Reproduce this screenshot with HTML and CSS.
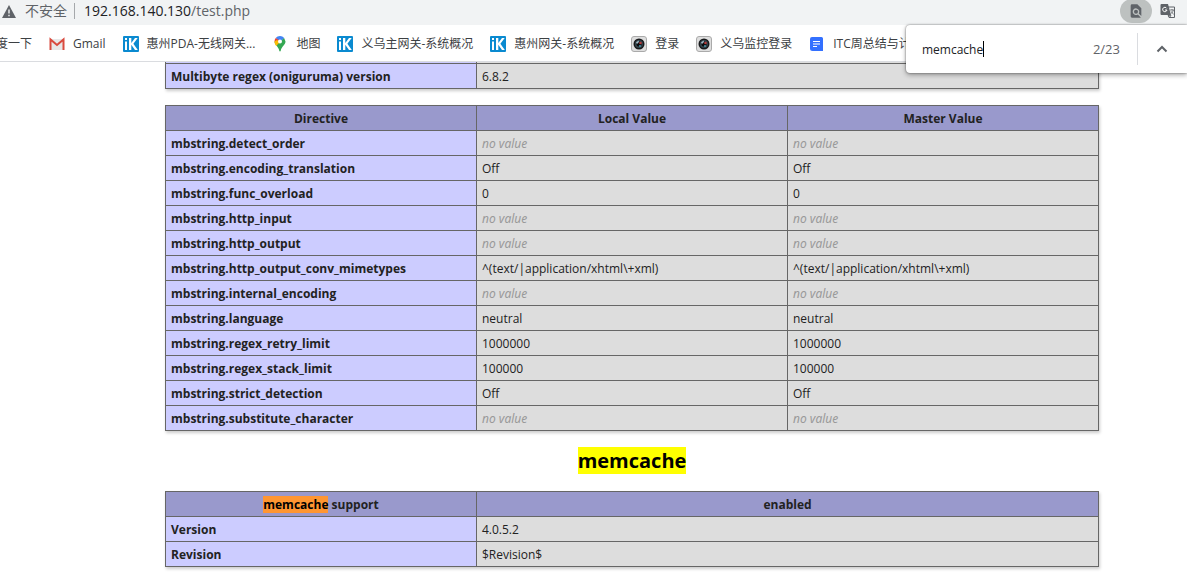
FILE: index.html
```html
<!DOCTYPE html>
<html lang="zh-CN">
<head>
<meta charset="utf-8">
<title>phpinfo()</title>
<link rel="stylesheet" href="styles.css">
</head>
<body>
<svg class="defs" aria-hidden="true">
  <symbol id="ikuai" viewBox="0 0 16 16"><rect width="16" height="16" rx="1" fill="#0a8ad0"/><path d="M2 2h2v2H2zM2 5.500h2V14H2zM6 2h2.300v5L12 2h2.700l-4.300 5.700L14.800 14H12L8.300 8.800V14H6z" fill="#fff"/></symbol>
  <symbol id="camera" viewBox="0 0 16 16"><rect x=".5" y=".5" width="15" height="15" rx="2.500" fill="#dedede" stroke="#aaa"/><circle cx="8" cy="8" r="5.500" fill="#17191b"/><circle cx="8" cy="8" r="4" fill="#34444c"/><circle cx="8" cy="8" r="2.500" fill="#0b0b0d"/><path d="M5 6.500 7.500 4.500 8 6 6 8z" fill="#9fb9c6"/><circle cx="9.500" cy="7" r="1.300" fill="#b43c3c"/><circle cx="9" cy="10" r="1" fill="#4b9aae"/></symbol>
</svg>
<header class="browser">
  <div class="address-bar">
    <svg class="warning" viewBox="0 0 14 13" aria-hidden="true"><path d="M7 0 14 13H0z" fill="#5f6368"/><path d="M6.300 4.500h1.400v4H6.300zM6.300 9.700h1.400v1.500H6.300z" fill="#f1f3f4"/></svg>
    <span class="insecure">不安全</span>
    <span class="url">192.168.140.130<span class="path">/test.php</span></span>
    <button class="tool active" type="button" aria-label="查找"><svg viewBox="0 0 24 24" width="16" height="16"><path d="M20 19.590V8l-6-6H6a2 2 0 0 0-2 2v16a2 2 0 0 0 2 2h12c.45 0 .85-.15 1.190-.4l-4.430-4.430A5 5 0 1 1 16.170 15.750zM9 13a3 3 0 1 0 6 0 3 3 0 0 0-6 0z" fill="#5f6368"/></svg></button>
    <button class="tool" type="button" aria-label="翻译"><svg viewBox="0 0 16 16" width="16" height="16"><path d="M7 4h7.500v10.500H9z" fill="#f1f3f4" stroke="#5f6368"/><path d="M1.500 1H8l3 11H1.500A1 1 0 0 1 .5 11V2a1 1 0 0 1 1-1z" fill="#5f6368"/><path d="M6.700 5.300A2.200 2.200 0 1 0 7 7H5" fill="none" stroke="#fff"/><path d="M10 7h4M12 6v1M13.300 7c-.4 2-1.500 3-2.800 4M11 8.300l2.700 3.200M8 12.500l1.500 2 1.500-2z" fill="none" stroke="#5f6368" stroke-width=".8"/></svg></button>
  </div>
  <nav class="bookmarks" aria-label="书签">
    <a class="cut" href="#">度一下</a>
    <a href="#"><svg viewBox="0 0 16 16"><path d="M1 3h14v11H1z" fill="#e8e8e8"/><path d="M1.500 14V3.500L8 9l6.500-5.500V14" fill="none" stroke="#d94b3f" stroke-width="2"/></svg>Gmail</a>
    <a href="#"><svg><use href="#ikuai"/></svg>惠州PDA-无线网关...</a>
    <a href="#"><svg viewBox="0 0 16 16"><path d="M2.500 5.500C2.500 9 6.500 10.500 7.200 14.500c.3 1.300 1.300 1.300 1.600 0C9.500 10.500 13.500 9 13.500 5.500L12 1.700 8 5.500z" fill="#34a853"/><path d="M8 0a5.500 5.500 0 0 0-4.300 2L8 5.500 12.200 1.900A5.500 5.500 0 0 0 8 0z" fill="#4285f4"/><path d="M3.700 2a5.500 5.500 0 0 0-1.200 3.500L5 7l2-3z" fill="#ea4335"/><path d="M2.500 5.500c0 1.700.7 3 1.700 4.500L8 6 5 4z" fill="#fbbc04"/><circle cx="8" cy="5.500" r="2" fill="#fff"/></svg>地图</a>
    <a href="#"><svg><use href="#ikuai"/></svg>义乌主网关-系统概况</a>
    <a href="#"><svg><use href="#ikuai"/></svg>惠州网关-系统概况</a>
    <a href="#"><svg><use href="#camera"/></svg>登录</a>
    <a href="#"><svg><use href="#camera"/></svg>义乌监控登录</a>
    <a href="#"><svg viewBox="0 0 16 16"><path d="M3 1h9.500A1.500 1.500 0 0 1 14 2.500V15H3.500A2.500 2.500 0 0 1 1 12.500V3a2 2 0 0 1 2-2z" fill="#3370ff"/><path d="M4 5.500h7M4 8h7M4 10.500h4" stroke="#fff" fill="none"/></svg>ITC周总结与计划</a>
  </nav>
  <form class="find" role="search">
    <input type="text" value="memcache" aria-label="在网页中查找">
    <span class="caret"></span>
    <output>2/23</output>
    <button type="button" aria-label="上一个"><svg viewBox="0 0 12 8" width="12" height="8"><path d="m1.500 6.500 4.500-4.500 4.500 4.500" fill="none" stroke="#5f6368" stroke-width="2"/></svg></button>
  </form>
</header>
<main>
  <table class="two">
    <tr class="sliver"><td class="e"></td><td></td></tr>
    <tr><td class="e">Multibyte regex (oniguruma) version</td><td>6.8.2</td></tr>
  </table>
  <table class="three">
    <tr><th>Directive</th><th>Local Value</th><th>Master Value</th></tr>
    <tr><td class="e">mbstring.detect_order</td><td><i>no value</i></td><td><i>no value</i></td></tr>
    <tr><td class="e">mbstring.encoding_translation</td><td>Off</td><td>Off</td></tr>
    <tr><td class="e">mbstring.func_overload</td><td>0</td><td>0</td></tr>
    <tr><td class="e">mbstring.http_input</td><td><i>no value</i></td><td><i>no value</i></td></tr>
    <tr><td class="e">mbstring.http_output</td><td><i>no value</i></td><td><i>no value</i></td></tr>
    <tr><td class="e">mbstring.http_output_conv_mimetypes</td><td>^(text/|application/xhtml\+xml)</td><td>^(text/|application/xhtml\+xml)</td></tr>
    <tr><td class="e">mbstring.internal_encoding</td><td><i>no value</i></td><td><i>no value</i></td></tr>
    <tr><td class="e">mbstring.language</td><td>neutral</td><td>neutral</td></tr>
    <tr><td class="e">mbstring.regex_retry_limit</td><td>1000000</td><td>1000000</td></tr>
    <tr><td class="e">mbstring.regex_stack_limit</td><td>100000</td><td>100000</td></tr>
    <tr><td class="e">mbstring.strict_detection</td><td>Off</td><td>Off</td></tr>
    <tr><td class="e">mbstring.substitute_character</td><td><i>no value</i></td><td><i>no value</i></td></tr>
  </table>
  <h2><mark>memcache</mark></h2>
  <table class="two">
    <tr><th><mark class="current">memcache</mark> support</th><th>enabled</th></tr>
    <tr><td class="e">Version</td><td>4.0.5.2</td></tr>
    <tr><td class="e">Revision</td><td>$Revision$</td></tr>
  </table>
</main>
</body>
</html>
```
FILE: styles.css
```css
* { box-sizing: border-box; }
body {
  margin: 0;
  background: #fff;
  color: #222;
  font-family: "Open Sans", "Noto Sans CJK SC", sans-serif;
  overflow: hidden;
}
.defs { display: none; }
button { border: 0; padding: 0; background: none; display: grid; place-items: center; }

.browser { position: relative; }
.address-bar {
  display: flex;
  align-items: center;
  height: 25px;
  padding: 0 11px 3px 2px;
  background: #f1f3f4;
  font-size: 14px;
  line-height: 20px;
  color: #202124;
}
.warning { width: 14px; height: 13px; }
.insecure {
  margin-left: 9px;
  padding-right: 7px;
  border-right: 1px solid #a5a8ab;
  line-height: 16px;
  color: #5f6368;
}
.url { flex: 1; margin-left: 9px; }
.path { color: #5f6368; }
.tool { width: 16px; height: 16px; }
.tool.active {
  width: 32px;
  height: 24px;
  margin-right: 8px;
  border-radius: 12px;
  background: #bdc1c0;
}

.bookmarks {
  display: flex;
  align-items: center;
  gap: 17px;
  height: 37px;
  padding-top: 1px;
  border-bottom: 1px solid #dadce0;
  overflow: hidden;
  white-space: nowrap;
  font-size: 12px;
  line-height: 16px;
}
.bookmarks a { display: flex; align-items: center; gap: 8px; color: #3c4043; text-decoration: none; }
.bookmarks .cut { margin-left: -4px; }
.bookmarks svg { width: 16px; height: 16px; flex: none; }

.find {
  position: absolute;
  top: 25px;
  right: 0;
  display: flex;
  align-items: center;
  width: 281px;
  height: 48px;
  padding: 0 16px;
  border-radius: 4px 0 0 4px;
  background: #fff;
  box-shadow: 0 0 2px #0008, 0 2px 5px #0005;
  font-size: 12px;
}
.find input {
  field-sizing: content;
  border: 0;
  padding: 0;
  outline: 0;
  background: none;
  font: inherit;
  color: #202124;
}
.caret { width: 1px; height: 16px; background: #000; }
.find output { margin-left: auto; color: #5f6368; font-size: 13px; }
.find button { height: 32px; margin-left: 17px; padding-left: 18px; padding-right: 3px; border-left: 1px solid #dadce0; }

main { padding-right: 12px; padding-left: 89px; }
table {
  width: 934px;
  max-width: 100%;
  margin: 0 auto 16px;
  border-collapse: collapse;
  table-layout: fixed;
  box-shadow: 1px 2px 3px #ccc;
  font-size: 12px;
  line-height: 16px;
}
td, th { height: 25px; padding: 5px 5px 3px; border: 1px solid #666; overflow-wrap: break-word; }
td { background: #ddd; text-align: left; }
th { background: #99c; }
.e { background: #ccf; font-weight: 700; }
.two td:first-child, .two th:first-child { width: 33.333%; }
.sliver td { height: 1px; padding: 0; border-top: 0; }
i { color: #999; font-family: "Noto Sans", sans-serif; }
h2 { margin: 16px 0; text-align: center; font-size: 20px; line-height: 28px; }
mark { background: #ff0; color: #000; }
mark.current { background: #ff9632; }
```
